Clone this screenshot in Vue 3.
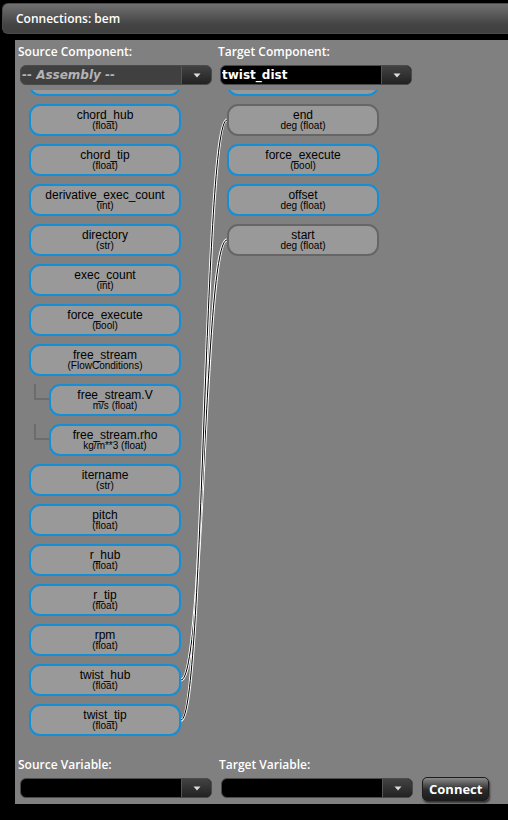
<script setup>
import { ref } from 'vue'

const sourceComponent = ref('-- Assembly --')
const targetComponent = ref('twist_dist')
const sourceVariable = ref('')
const targetVariable = ref('')

const sources = [
  { name: '', type: '' },
  { name: 'chord_hub', type: '(float)' },
  { name: 'chord_tip', type: '(float)' },
  { name: 'derivative_exec_count', type: '(int)' },
  { name: 'directory', type: '(str)' },
  { name: 'exec_count', type: '(int)' },
  { name: 'force_execute', type: '(bool)' },
  { name: 'free_stream', type: '(FlowConditions)' },
  { name: 'free_stream.V', type: 'm/s (float)', child: true },
  { name: 'free_stream.rho', type: 'kg/m**3 (float)', child: true },
  { name: 'itername', type: '(str)' },
  { name: 'pitch', type: '(float)' },
  { name: 'r_hub', type: '(float)' },
  { name: 'r_tip', type: '(float)' },
  { name: 'rpm', type: '(float)' },
  { name: 'twist_hub', type: '(float)' },
  { name: 'twist_tip', type: '(float)' },
]

const targets = [
  { name: '', type: '' },
  { name: 'end', type: 'deg (float)', connected: true },
  { name: 'force_execute', type: '(bool)' },
  { name: 'offset', type: 'deg (float)' },
  { name: 'start', type: 'deg (float)', connected: true },
]

const links = [
  { from: 'twist_hub', to: 'start' },
  { from: 'twist_tip', to: 'end' },
]

// Each row of the diagram is 40px tall; a wire meets a node at its middle.
const rowMiddle = (list, name) => list.findIndex((v) => v.name === name) * 40 + 16
const wires = links.map(({ from, to }) => {
  const y1 = rowMiddle(sources, from)
  const y2 = rowMiddle(targets, to)
  return `M0 ${y1} C23 ${y1} 23 ${y2} 46 ${y2}`
})
</script>

<template>
  <div class="window">
    <header class="titlebar"><h1>Connections: bem</h1></header>
    <main class="panel">
      <form class="pickers" @submit.prevent>
        <div class="field">
          <label for="source-component">Source Component:</label>
          <div class="combo muted">
            <select id="source-component" v-model="sourceComponent">
              <option>-- Assembly --</option>
            </select>
            <span class="arrow"><svg width="8" height="5" viewBox="0 0 8 5"><path d="M0.5 0.5H7.5L4 4.5Z" /></svg></span>
          </div>
        </div>
        <div class="field">
          <label for="target-component">Target Component:</label>
          <div class="combo">
            <select id="target-component" v-model="targetComponent">
              <option>twist_dist</option>
            </select>
            <span class="arrow"><svg width="8" height="5" viewBox="0 0 8 5"><path d="M0.5 0.5H7.5L4 4.5Z" /></svg></span>
          </div>
        </div>
      </form>

      <section class="viewport">
        <div class="diagram">
          <ul class="column">
            <li v-for="(v, i) in sources" :key="i" :class="{ child: v.child }">
              <div class="node">
                <span class="name">{{ v.name }}</span>
                <span class="type">{{ v.type }}</span>
              </div>
            </li>
          </ul>
          <svg class="wires" width="46" height="672" viewBox="0 0 46 672" aria-hidden="true">
            <g v-for="d in wires" :key="d">
              <path :d="d" class="casing" />
              <path :d="d" class="core" />
            </g>
          </svg>
          <ul class="column">
            <li v-for="(v, i) in targets" :key="i">
              <div class="node" :class="{ connected: v.connected }">
                <span class="name">{{ v.name }}</span>
                <span class="type">{{ v.type }}</span>
              </div>
            </li>
          </ul>
        </div>
      </section>

      <form class="pickers bottom" @submit.prevent>
        <div class="field">
          <label for="source-variable">Source Variable:</label>
          <div class="combo">
            <select id="source-variable" v-model="sourceVariable">
              <option value=""></option>
            </select>
            <span class="arrow"><svg width="8" height="5" viewBox="0 0 8 5"><path d="M0.5 0.5H7.5L4 4.5Z" /></svg></span>
          </div>
        </div>
        <div class="field">
          <label for="target-variable">Target Variable:</label>
          <div class="combo">
            <select id="target-variable" v-model="targetVariable">
              <option value=""></option>
            </select>
            <span class="arrow"><svg width="8" height="5" viewBox="0 0 8 5"><path d="M0.5 0.5H7.5L4 4.5Z" /></svg></span>
          </div>
        </div>
        <button class="connect" type="submit">Connect</button>
      </form>
    </main>
  </div>
</template>

<style>
body {
  background: #000;
}
</style>

<style scoped>
.window {
  box-sizing: border-box;
  min-height: 100vh;
  padding: 3px 0 16px;
  background: #000;
  color: #fff;
  font-family: "Open Sans", "Noto Sans", sans-serif;
  overflow: hidden;
}

.titlebar {
  box-sizing: border-box;
  height: 31px;
  margin-left: 2px;
  padding-left: 13px;
  display: flex;
  align-items: center;
  border: 1px solid #4c4c4c;
  border-right: 0;
  border-radius: 6px 0 0 6px;
  background: linear-gradient(#707070, #444 70%, #404040);
}

h1 {
  margin: 0;
  font-size: 12px;
  line-height: 16px;
  font-weight: 600;
}

.panel {
  margin: 6px 0 0 15px;
  padding: 4px 0 6px 3px;
  background: #808080;
}

.pickers {
  display: flex;
  gap: 6px;
}

.field {
  width: 194px;
}

label {
  display: block;
  font-size: 12px;
  line-height: 16px;
  font-weight: 600;
}

.combo {
  box-sizing: border-box;
  display: flex;
  height: 20px;
  margin: 5px 0 0 2px;
  border: 1px solid #4a4a4a;
  border-radius: 6px;
  background: #000;
  overflow: hidden;
}

select {
  flex: 1;
  min-width: 0;
  padding: 0 0 0 1px;
  border: 0;
  outline: 0;
  appearance: none;
  background: transparent;
  color: #fff;
  font: bold 12px/18px "DejaVu Sans", sans-serif;
}

.muted {
  background: #404040;
}

.muted select {
  color: #b4b4b4;
  font-style: italic;
}

.arrow {
  width: 29px;
  display: flex;
  align-items: center;
  justify-content: center;
  border-left: 1px solid #555;
  background: linear-gradient(#424242, #222);
  pointer-events: none;
}

.arrow path {
  fill: #ddd;
}

.viewport {
  height: 660px;
  margin-top: 5px;
  padding-left: 11px;
  overflow: hidden;
}

.diagram {
  display: flex;
  align-items: flex-start;
  margin-top: -26px;
}

.column {
  width: 152px;
  margin: 0;
  padding: 0;
  display: grid;
  gap: 8px;
  list-style: none;
}

.node {
  box-sizing: border-box;
  height: 32px;
  padding-top: 2px;
  display: flex;
  flex-direction: column;
  align-items: center;
  border: 2px solid #148fd6;
  border-radius: 11px;
  background: #999;
  color: #000;
  font-family: "Liberation Sans", Arial, sans-serif;
}

.node.connected {
  border-color: #666;
}

.name {
  font-size: 12px;
  line-height: 14px;
}

.type {
  font-size: 10px;
  line-height: 8px;
}

.child {
  display: flex;
}

.child::before {
  content: "";
  box-sizing: border-box;
  flex: none;
  width: 15px;
  height: 16px;
  margin-left: 5px;
  border: solid #6c6c6c;
  border-width: 0 0 2px 2px;
}

.child .node {
  flex: 1;
}

.wires {
  flex: none;
  overflow: visible;
}

.wires path {
  fill: none;
}

.casing {
  stroke: #fff;
  stroke-width: 3;
}

.core {
  stroke: #000;
  stroke-width: 1;
}

.bottom {
  gap: 7px;
  margin-top: 7px;
}

.connect {
  align-self: flex-end;
  height: 24px;
  margin: 0 0 -3px 2px;
  padding: 0 6px;
  border: 1px solid #1c1c1c;
  border-radius: 5px;
  background: linear-gradient(#888, #2a2a2a 55%, #1c1c1c);
  box-shadow: 1px 2px 2px #333;
  color: #fff;
  font: 700 13px/20px "Open Sans", sans-serif;
}
</style>
